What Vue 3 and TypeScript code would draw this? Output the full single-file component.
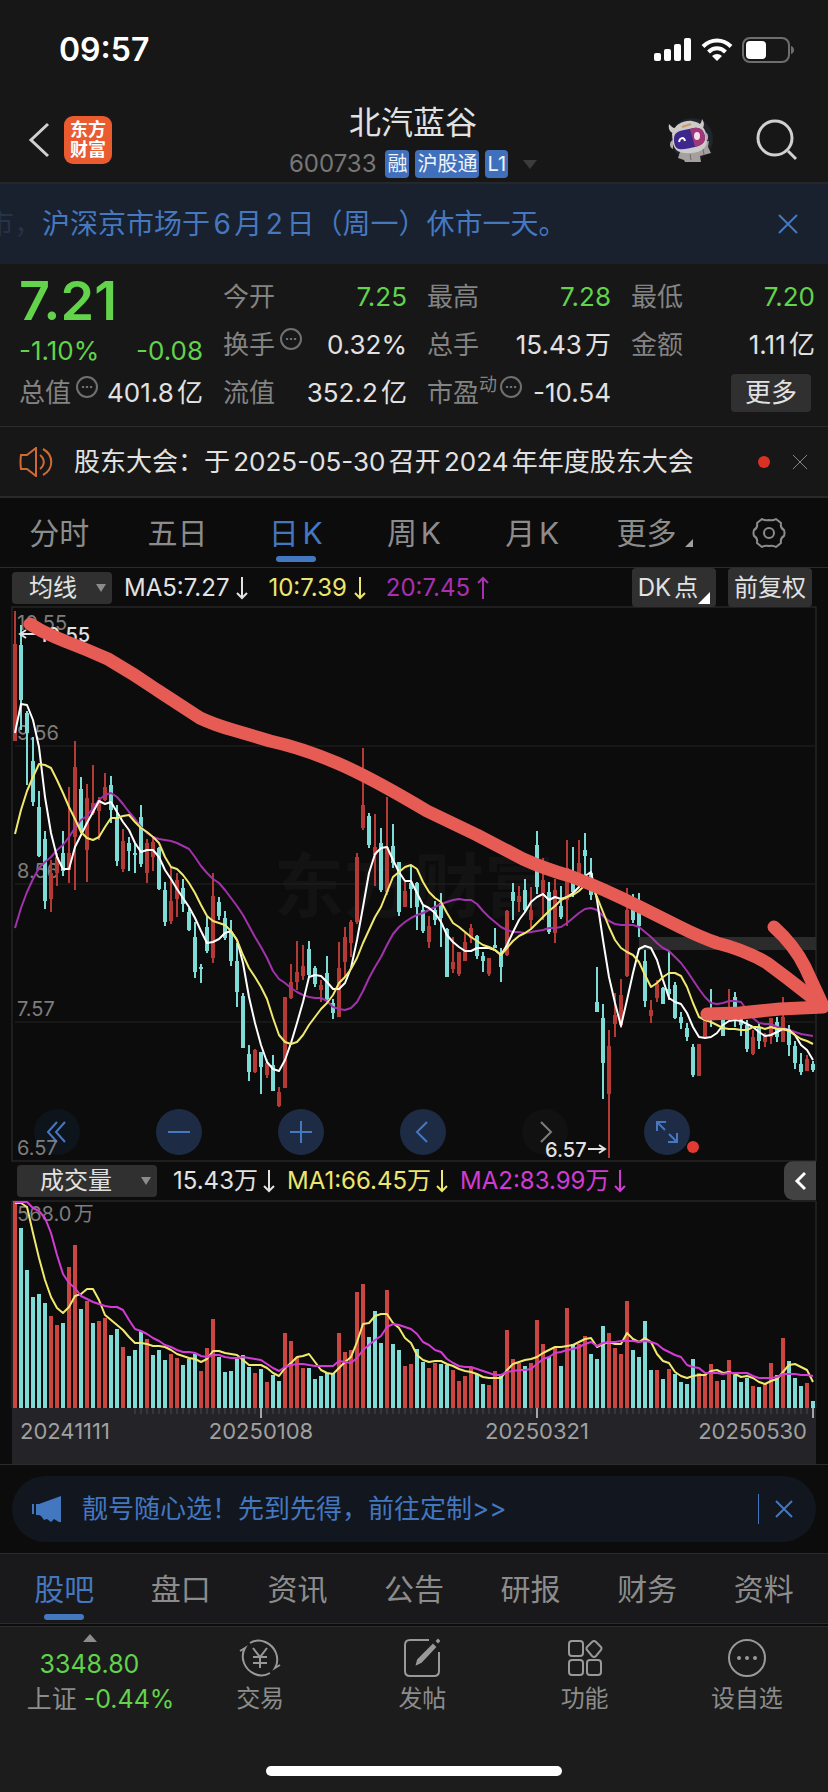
<script setup lang="ts">
import { ref } from 'vue'

type Candle = [up: number, high: number, open: number, close: number, low: number]

const STEP = 6
const FIRST = 15
const x = (i: number): number => FIRST + i * STEP

const candles: Candle[] = [
  [1, 611, 644, 741, 741], [0, 625, 645, 700, 730], [0, 711, 713, 733, 785], [0, 737, 761, 802, 806],
  [0, 791, 807, 856, 857], [0, 831, 839, 901, 909], [1, 860, 873, 899, 912], [1, 853, 857, 873, 886],
  [0, 831, 853, 871, 876], [1, 787, 853, 870, 883], [1, 741, 767, 837, 890], [0, 777, 789, 830, 833],
  [1, 784, 798, 850, 882], [1, 765, 803, 813, 815], [1, 797, 800, 811, 840], [1, 773, 787, 800, 801],
  [0, 776, 785, 810, 823], [0, 805, 818, 861, 866], [1, 829, 841, 869, 872], [0, 837, 843, 851, 871],
  [0, 843, 853, 855, 873], [0, 805, 817, 864, 867], [1, 839, 843, 873, 883], [1, 837, 842, 857, 871],
  [0, 847, 848, 889, 890], [0, 882, 890, 922, 926], [1, 867, 901, 921, 924], [1, 873, 880, 899, 917],
  [0, 879, 888, 904, 912], [0, 908, 912, 930, 931], [0, 922, 937, 972, 978], [0, 964, 967, 969, 983],
  [0, 916, 927, 951, 953], [1, 873, 896, 958, 963], [0, 897, 902, 916, 920], [0, 911, 918, 938, 940],
  [0, 920, 932, 961, 966], [0, 943, 961, 992, 1007], [0, 993, 996, 1048, 1048], [0, 1045, 1054, 1072, 1081],
  [1, 1049, 1050, 1072, 1073], [0, 1052, 1052, 1067, 1094], [1, 1059, 1063, 1075, 1078], [0, 1055, 1065, 1091, 1091],
  [1, 1087, 1092, 1106, 1107], [1, 997, 997, 1088, 1088], [1, 964, 982, 998, 999], [1, 941, 972, 982, 990],
  [1, 945, 966, 976, 980], [0, 941, 949, 975, 977], [0, 966, 968, 984, 987], [1, 980, 985, 990, 1002],
  [0, 956, 973, 999, 1002], [0, 999, 1003, 1013, 1019], [1, 942, 968, 1017, 1017], [1, 927, 937, 962, 977],
  [1, 920, 922, 943, 957], [1, 853, 857, 922, 924], [1, 748, 805, 828, 830], [0, 813, 816, 845, 848],
  [1, 814, 847, 855, 886], [0, 828, 843, 890, 892], [1, 797, 847, 892, 895], [0, 824, 846, 863, 868],
  [0, 862, 862, 912, 916], [1, 882, 891, 907, 907], [0, 865, 883, 889, 908], [0, 882, 883, 907, 930],
  [0, 906, 910, 931, 933], [1, 916, 926, 942, 948], [0, 901, 910, 920, 925], [0, 893, 903, 918, 947],
  [0, 928, 929, 977, 977], [1, 937, 962, 969, 973], [1, 952, 952, 974, 976], [1, 933, 942, 961, 961],
  [1, 924, 928, 938, 943], [0, 935, 936, 956, 959], [0, 952, 956, 961, 972], [1, 958, 958, 974, 976],
  [0, 928, 945, 948, 948], [0, 948, 954, 967, 982], [1, 910, 911, 955, 956], [0, 883, 892, 901, 920],
  [1, 886, 896, 902, 912], [0, 879, 890, 910, 912], [1, 887, 910, 920, 928], [0, 831, 845, 887, 894],
  [1, 858, 880, 893, 920], [0, 882, 892, 932, 934], [1, 879, 890, 933, 943], [0, 886, 906, 917, 919],
  [1, 840, 868, 900, 926], [0, 847, 875, 892, 897], [1, 840, 863, 883, 887], [0, 833, 850, 856, 877],
  [0, 858, 873, 895, 900], [0, 967, 1002, 1012, 1012], [0, 1004, 1018, 1063, 1099], [1, 1030, 1046, 1094, 1158],
  [1, 993, 1015, 1024, 1037], [1, 979, 995, 1025, 1028], [1, 888, 910, 976, 977], [0, 894, 905, 920, 923],
  [0, 893, 912, 926, 937], [0, 950, 961, 1001, 1007], [1, 1000, 1010, 1016, 1023], [1, 980, 984, 998, 1002],
  [0, 987, 988, 1004, 1004], [0, 951, 989, 994, 1000], [0, 982, 985, 1018, 1019], [0, 1012, 1017, 1023, 1029],
  [0, 1023, 1028, 1037, 1041], [0, 1044, 1047, 1075, 1077], [1, 1044, 1044, 1076, 1076], [1, 1018, 1018, 1037, 1037],
  [0, 989, 1013, 1020, 1027], [1, 1013, 1013, 1020, 1020], [0, 1017, 1020, 1036, 1036], [1, 989, 1007, 1013, 1022],
  [0, 992, 997, 1020, 1027], [0, 1013, 1018, 1025, 1036], [0, 1020, 1025, 1049, 1052], [1, 1030, 1037, 1054, 1055],
  [0, 1023, 1027, 1041, 1049], [1, 1033, 1035, 1042, 1047], [1, 1018, 1018, 1037, 1044], [0, 1017, 1022, 1037, 1042],
  [1, 997, 1017, 1042, 1042], [0, 1025, 1029, 1045, 1056], [0, 1041, 1046, 1063, 1069], [0, 1053, 1064, 1072, 1075],
  [1, 1055, 1059, 1071, 1071], [0, 1061, 1064, 1070, 1072],
]

const ma5 = [
  733, 704, 705, 720, 747, 797, 833, 857, 869, 869, 847, 835, 823, 812, 801, 804, 802, 812, 822, 830,
  843, 852, 850, 850, 857, 870, 879, 889, 898, 907, 918, 931, 943, 942, 939, 933, 931, 940, 963, 997,
  1023, 1045, 1062, 1069, 1071, 1060, 1043, 1023, 1002, 977, 975, 976, 982, 989, 989, 983, 968, 940, 907, 873,
  854, 848, 847, 860, 872, 881, 881, 893, 905, 908, 913, 922, 935, 942, 947, 951, 951, 948, 948, 948,
  950, 955, 945, 932, 920, 912, 902, 897, 894, 900, 897, 899, 897, 893, 887, 876, 872, 900, 940, 977,
  1003, 1026, 1000, 973, 949, 946, 948, 960, 980, 998, 1002, 1004, 1013, 1027, 1037, 1038, 1037, 1033, 1025, 1021,
  1020, 1021, 1024, 1027, 1032, 1036, 1035, 1032, 1029, 1030, 1035, 1045, 1050, 1060,
]
const ma10 = [
  834, 810, 791, 777, 764, 765, 768, 780, 793, 807, 819, 832, 838, 840, 837, 827, 818, 818, 816, 815,
  822, 828, 832, 837, 843, 857, 867, 869, 875, 883, 893, 905, 916, 921, 923, 925, 931, 940, 955, 968,
  977, 987, 999, 1018, 1035, 1042, 1044, 1042, 1035, 1025, 1017, 1009, 1003, 995, 983, 977, 969, 958, 943, 930,
  917, 907, 892, 877, 872, 867, 865, 869, 882, 892, 898, 902, 913, 923, 927, 932, 937, 941, 945, 947,
  950, 955, 948, 941, 936, 933, 929, 923, 917, 911, 906, 900, 897, 895, 891, 885, 884, 897, 912, 927,
  940, 948, 952, 955, 962, 975, 987, 983, 977, 973, 973, 976, 987, 1003, 1017, 1020, 1022, 1025, 1028, 1029,
  1029, 1030, 1030, 1027, 1027, 1029, 1027, 1029, 1029, 1031, 1035, 1039, 1041, 1044,
]
const ma20 = [
  928, 908, 892, 879, 868, 862, 857, 850, 845, 837, 828, 820, 816, 808, 800, 795, 793, 797, 804, 812,
  819, 827, 833, 837, 839, 840, 841, 843, 846, 849, 857, 866, 873, 879, 883, 890, 898, 906, 915, 926,
  937, 947, 958, 971, 979, 983, 988, 992, 995, 997, 998, 998, 1001, 1007, 1009, 1010, 1008, 1002, 991, 978,
  967, 957, 945, 934, 927, 922, 918, 915, 913, 910, 907, 904, 902, 900, 899, 900, 900, 904, 911, 917,
  922, 927, 930, 932, 932, 933, 932, 931, 930, 928, 928, 927, 923, 918, 913, 909, 908, 910, 916, 921,
  924, 925, 925, 925, 927, 932, 937, 943, 948, 951, 957, 963, 971, 980, 989, 997, 1003, 1004, 1003, 1001,
  1001, 1002, 1010, 1018, 1023, 1024, 1024, 1027, 1028, 1030, 1032, 1034, 1035, 1036,
]

const volumes = [
  1201, 1228, 1270, 1297, 1294, 1303, 1316, 1325, 1323, 1267, 1245, 1309, 1301, 1323, 1321, 1318, 1335, 1329, 1347, 1356,
  1350, 1331, 1339, 1355, 1350, 1360, 1354, 1358, 1365, 1359, 1354, 1371, 1348, 1319, 1357, 1372, 1371, 1359, 1355, 1367,
  1373, 1369, 1382, 1375, 1381, 1333, 1341, 1357, 1368, 1368, 1379, 1376, 1373, 1373, 1333, 1352, 1350, 1292, 1284, 1337,
  1311, 1343, 1290, 1344, 1350, 1366, 1364, 1349, 1362, 1368, 1363, 1364, 1365, 1370, 1381, 1376, 1367, 1374, 1384, 1385,
  1371, 1376, 1330, 1359, 1363, 1366, 1363, 1320, 1344, 1357, 1347, 1366, 1308, 1344, 1344, 1336, 1354, 1359, 1326, 1333,
  1348, 1354, 1301, 1350, 1357, 1321, 1370, 1370, 1379, 1369, 1374, 1382, 1384, 1359, 1373, 1374, 1364, 1381, 1380, 1360,
  1375, 1382, 1378, 1386, 1387, 1384, 1363, 1375, 1338, 1361, 1378, 1386, 1383, 1401,
]
const volumeUp =
  '10000011011010110010' + '00100011000111000000' + '10100111100000111110' + '00100110011001111001' +
  '10111011101010110001' + '11100001010000111101' + '00010110100010'
const volMa1 = [
  1203, 1203, 1207, 1233, 1258, 1280, 1297, 1308, 1313, 1307, 1296, 1294, 1289, 1289, 1300, 1315, 1320, 1325, 1330, 1337,
  1343, 1343, 1344, 1346, 1346, 1347, 1350, 1354, 1356, 1358, 1359, 1362, 1359, 1351, 1351, 1353, 1354, 1355, 1360, 1365,
  1365, 1365, 1368, 1373, 1376, 1368, 1363, 1357, 1356, 1354, 1362, 1370, 1373, 1374, 1368, 1362, 1357, 1342, 1324, 1323,
  1316, 1314, 1314, 1323, 1328, 1338, 1343, 1355, 1360, 1362, 1361, 1361, 1364, 1366, 1369, 1371, 1372, 1374, 1377, 1378,
  1378, 1378, 1370, 1364, 1362, 1360, 1359, 1357, 1353, 1350, 1347, 1347, 1346, 1345, 1342, 1339, 1338, 1347, 1344, 1342,
  1344, 1344, 1333, 1339, 1342, 1338, 1342, 1354, 1361, 1363, 1372, 1376, 1378, 1376, 1375, 1375, 1371, 1370, 1373, 1372,
  1374, 1377, 1376, 1378, 1382, 1384, 1381, 1379, 1372, 1365, 1364, 1367, 1370, 1382,
]
const volMa2 = [
  1202, 1202, 1202, 1208, 1211, 1218, 1233, 1255, 1274, 1283, 1288, 1296, 1299, 1302, 1304, 1306, 1307, 1307, 1310, 1320,
  1329, 1331, 1334, 1338, 1341, 1345, 1347, 1350, 1352, 1352, 1353, 1356, 1357, 1355, 1355, 1357, 1358, 1358, 1357, 1358,
  1359, 1360, 1364, 1368, 1371, 1367, 1365, 1364, 1364, 1365, 1366, 1366, 1366, 1366, 1361, 1362, 1363, 1358, 1350, 1345,
  1340, 1336, 1327, 1324, 1325, 1327, 1329, 1334, 1342, 1345, 1350, 1352, 1359, 1363, 1366, 1367, 1367, 1369, 1371, 1373,
  1375, 1375, 1372, 1371, 1370, 1370, 1369, 1364, 1359, 1357, 1353, 1352, 1350, 1349, 1347, 1344, 1342, 1346, 1343, 1342,
  1342, 1341, 1341, 1341, 1342, 1341, 1342, 1344, 1349, 1352, 1355, 1357, 1365, 1367, 1368, 1373, 1373, 1373, 1374, 1373,
  1373, 1373, 1373, 1376, 1378, 1378, 1378, 1377, 1374, 1374, 1374, 1375, 1375, 1376,
]

const line = (ys: number[]): string => ys.map((y, i) => `${x(i)},${y}`).join(' ')

const levels = [
  { label: '10.55', y: 630 },
  { label: '9.56', y: 740 },
  { label: '8.56', y: 878 },
  { label: '7.57', y: 1016 },
  { label: '6.57', y: 1155 },
]
const gridLines = [746, 884, 1022]
const majorTicks = [41, 87, 133]
const minorTicks = Array.from({ length: 113 }, (_, i) => i + 20)
const dates = [
  { label: '20241111', x: 20, anchor: 'start' },
  { label: '20250108', x: 261, anchor: 'middle' },
  { label: '20250321', x: 537, anchor: 'middle' },
  { label: '20250530', x: 807, anchor: 'end' },
]

const periods = ['分时', '五日', '日K', '周K', '月K', '更多']
const period = ref('日K')
const sections = ['股吧', '盘口', '资讯', '公告', '研报', '财务', '资料']
const section = ref('股吧')
</script>

<template>
  <main class="app">
    <header class="top">
      <div class="status">
        <time>09:57</time>
        <div class="status-icons">
          <svg width="38" height="24" viewBox="0 0 38 24" fill="#fff">
            <rect x="0" y="15" width="7" height="8" rx="2" /><rect x="10" y="11" width="7" height="12" rx="2" />
            <rect x="20" y="6" width="7" height="17" rx="2" /><rect x="30" y="0" width="7" height="23" rx="2" />
          </svg>
          <svg width="32" height="24" viewBox="0 0 32 24" fill="none" stroke="#fff" stroke-width="4">
            <path d="M2 8.500C10 .5 22 .5 30 8.500" /><path d="M7.500 14C12.500 9 19.500 9 24.500 14" />
            <path d="M16 23l-5-5c3-2.700 7-2.700 10 0z" fill="#fff" stroke="none" />
          </svg>
          <svg width="53" height="26" viewBox="0 0 53 26">
            <rect x="1" y="1" width="46" height="24" rx="7" fill="none" stroke="#6e6e6e" stroke-width="2" />
            <rect x="4" y="4" width="20" height="18" rx="4" fill="#fff" />
            <path d="M49 9c4 1 4 7 0 8z" fill="#6e6e6e" />
          </svg>
        </div>
      </div>
      <nav class="nav">
        <div class="nav-left">
          <button class="plain" aria-label="返回">
            <svg width="22" height="36" viewBox="0 0 22 36" fill="none" stroke="#d0d0d0" stroke-width="3">
              <path d="M20 2L3 18l17 16" />
            </svg>
          </button>
          <a class="logo" href="#"><span>东方</span><span>财富</span></a>
        </div>
        <div class="title">
          <h1>北汽蓝谷</h1>
          <div class="sub">
            <span class="code">600733</span>
            <span class="tag">融</span><span class="tag">沪股通</span><span class="tag">L1</span>
            <svg class="drop" width="14" height="9" viewBox="0 0 14 9"><path d="M0 0h14L7 9z" fill="#3b3b3b" /></svg>
          </div>
        </div>
        <div class="nav-right">
          <button class="plain" aria-label="智能助手">
            <svg width="50" height="48" viewBox="0 0 50 48">
              <ellipse cx="26" cy="23" rx="21" ry="21" fill="#20242b" />
              <path d="M14 36l-2 6 6 2 1 2h16l-1-6 11-3-3-6 1-6-5 1-3 7z" fill="#a5a09d" />
              <path d="M24 38l1 6M37 33l1 6" stroke="#6f6b6c" stroke-width="1" />
              <path d="M3 8c-1 5 1 8 4 9l3-4C7 12 5 10 3 8zM36 3c3 4 2 8 0 10l-4-3c2-2 4-4 4-7z" fill="#cdcac9" />
              <path d="M6 18C8 9 17 4 26 5c9 1 14 8 15 17 1 10-6 14-15 15-10 1-17-1-19-9z" fill="#cdcac9" />
              <path d="M8 23c0-6 4-8 10-9l10-2c7-1 10 3 11 9 0 6-3 8-10 10-6 1-12 3-16 2-4-1-5-5-5-10z" fill="#3d268c" />
              <path d="M24 13l4-1c7-1 10 3 11 9 0 6-3 8-10 10z" fill="#9f3874" />
              <path d="M13 26c1-5 5-5 6-1" stroke="#fff" stroke-width="2" fill="none" />
              <ellipse cx="31" cy="20" rx="3" ry="4" fill="#f4dff0" />
              <path d="M16 11l9-3" stroke="#c99d61" stroke-width="2" />
              <path d="M7 24c-4 1-4 8 0 9zM39 16c4 1 4 8 1 10z" fill="#b2aeae" />
            </svg>
          </button>
          <button class="plain" aria-label="搜索">
            <svg width="42" height="42" viewBox="0 0 42 42" fill="none" stroke="#d0d0d0" stroke-width="3">
              <circle cx="19" cy="19" r="17" /><path d="M32 32l8 8" />
            </svg>
          </button>
        </div>
      </nav>
    </header>

    <section class="notice">
      <span class="faded">市，</span>
      <p>沪深京市场于6月2日（周一）休市一天。</p>
      <button class="plain" aria-label="关闭公告">
        <svg width="20" height="20" viewBox="0 0 20 20" stroke="#4678c0" stroke-width="2"><path d="M1 1l18 18M19 1L1 19" /></svg>
      </button>
    </section>

    <section class="quote">
      <div class="col">
        <strong class="price">7.21</strong>
        <div class="cell change"><span>-1.10%</span><span>-0.08</span></div>
        <div class="cell"><span class="key">总值<i class="info">···</i></span><span class="val">401.8亿</span></div>
      </div>
      <div class="col">
        <div class="cell"><span class="key">今开</span><span class="val green">7.25</span></div>
        <div class="cell"><span class="key">换手<i class="info">···</i></span><span class="val">0.32%</span></div>
        <div class="cell"><span class="key">流值</span><span class="val">352.2亿</span></div>
      </div>
      <div class="col">
        <div class="cell"><span class="key">最高</span><span class="val green">7.28</span></div>
        <div class="cell"><span class="key">总手</span><span class="val">15.43万</span></div>
        <div class="cell"><span class="key">市盈<sup>动</sup><i class="info near">···</i></span><span class="val">-10.54</span></div>
      </div>
      <div class="col">
        <div class="cell"><span class="key">最低</span><span class="val green">7.20</span></div>
        <div class="cell"><span class="key">金额</span><span class="val">1.11亿</span></div>
        <div class="cell end"><button class="more">更多</button></div>
      </div>
    </section>

    <section class="meeting">
      <svg width="36" height="30" viewBox="0 0 36 30" fill="none" stroke="#cf6a34" stroke-width="2">
        <path d="M2 8h6l9-7v28l-9-7H2q-1-7 0-14z" /><path d="M21 8c5 4 5 10 0 14M24 2c11 6 11 20 0 26" />
      </svg>
      <a href="#">股东大会：于2025-05-30召开2024年年度股东大会</a>
      <i class="red-dot"></i>
      <button class="plain" aria-label="关闭提醒">
        <svg width="16" height="16" viewBox="0 0 16 16" stroke="#858585" stroke-width="1"><path d="M1 1l14 14M15 1L1 15" /></svg>
      </button>
    </section>

    <div class="periods">
      <button v-for="p in periods" :key="p" :class="{ on: p === period }" @click="period = p">
        {{ p }}<svg v-if="p === '更多'" class="corner" width="8" height="8" viewBox="0 0 8 8"><path d="M8 0v8H0z" fill="#a0a0a0" /></svg>
      </button>
      <button aria-label="设置">
        <svg width="34" height="32" viewBox="0 0 34 32" fill="none" stroke="#8c8c8c" stroke-width="2" stroke-linejoin="round">
          <path d="M10 2q3 2 7 1 4 1 7-1l5 4q-1 5 3 7 1 3 0 6-4 2-3 7l-5 4q-3-2-7-1-4-1-7 1l-5-4q1-5-3-7-1-3 0-6 4-2 3-7z" />
          <circle cx="17" cy="16" r="5" />
        </svg>
      </button>
    </div>

    <section class="chart">
      <div class="bar">
        <button class="select">均线<span class="tri"></span></button>
        <div class="averages">
          <span>MA5:7.27<svg class="arrow" width="12" height="24" viewBox="0 0 12 24"><path d="M6 1v21M1 17l5 5 5-5" /></svg></span>
          <span class="yellow">10:7.39<svg class="arrow" width="12" height="24" viewBox="0 0 12 24"><path d="M6 1v21M1 17l5 5 5-5" /></svg></span>
          <span class="purple">20:7.45<svg class="arrow" width="12" height="24" viewBox="0 0 12 24"><path d="M6 23V2M1 7l5-5 5 5" /></svg></span>
        </div>
        <button class="chip">DK点<svg class="chip-corner" width="12" height="12" viewBox="0 0 12 12"><path d="M12 0v12H0z" fill="#fff" /></svg></button>
        <button class="chip">前复权</button>
      </div>

      <div class="plot">
        <svg class="graph" viewBox="12 607 804 554" role="img" aria-label="日K线图">
          <text class="mark" x="414" y="912" text-anchor="middle">东方财富</text>
          <g stroke="#232323"><path v-for="y in gridLines" :key="y" :d="`M15 ${y}H815`" /></g>
          <rect x="12" y="607" width="804" height="554" fill="none" stroke="#303030" />
          <rect x="639" y="937" width="177" height="13" fill="#2b2b2b" />
          <g class="scale"><text v-for="l in levels" :key="l.label" x="17" :y="l.y">{{ l.label }}</text></g>
          <g v-for="(c, i) in candles" :key="i" :fill="c[0] ? '#b53a36' : '#7edbd6'">
            <rect :x="x(i) - 1" :y="c[1]" width="2" :height="c[4] - c[1]" />
            <rect :x="x(i) - 2" :y="c[2]" width="4" :height="c[3] - c[2]" />
          </g>
          <g fill="none" stroke-width="2" stroke-linejoin="round">
            <polyline :points="line(ma20)" stroke="#a232ab" />
            <polyline :points="line(ma5)" stroke="#fff" />
            <polyline :points="line(ma10)" stroke="#f1e96f" />
          </g>
          <g class="peak">
            <path d="M36 634H20M26 630l-6 4 6 4" /><text x="39" y="642">10.55</text>
            <path d="M588 1149h17M599 1145l6 4-6 4" /><text x="545" y="1157">6.57</text>
          </g>
          <g class="trend">
            <path d="M30 624Q42 632 55 637L67 642Q88 650 108 659Q134 674 157 690L200 718Q215 725 233 730L270 741Q302 748 337 763Q370 777 427 811L477 835L523 859Q545 869 570 876Q602 888 640 907L680 927Q700 937 717 943Q745 950 767 963L787 978L823 1006" />
            <path d="M774 927Q794 945 805 967L823 1006" /><path d="M707 1014L740 1013L780 1009L823 1007" />
          </g>
        </svg>
        <div class="tools">
          <button class="dim" aria-label="最早"><svg viewBox="0 0 24 24"><path d="M12 2L3 12l9 10M20 2l-9 10 9 10" /></svg></button>
          <button aria-label="缩小"><svg viewBox="0 0 24 24"><path d="M1 12h22" /></svg></button>
          <button aria-label="放大"><svg viewBox="0 0 24 24"><path d="M1 12h22M12 1v22" /></svg></button>
          <button aria-label="左移"><svg viewBox="0 0 24 24"><path d="M16 2L6 12l10 10" /></svg></button>
          <button class="grey" aria-label="右移"><svg viewBox="0 0 24 24"><path d="M8 2l10 10L8 22" /></svg></button>
          <button class="expand" aria-label="全屏"><svg viewBox="0 0 24 24"><path d="M2 11V2h9M2 2l8 8M22 13v9h-9M22 22l-8-8" /></svg><i></i></button>
        </div>
      </div>

      <div class="bar volume">
        <button class="select wide">成交量<span class="tri"></span></button>
        <div class="averages tight">
          <span>15.43万<svg class="arrow" width="12" height="24" viewBox="0 0 12 24"><path d="M6 1v21M1 17l5 5 5-5" /></svg></span>
          <span class="yellow">MA1:66.45万<svg class="arrow" width="12" height="24" viewBox="0 0 12 24"><path d="M6 1v21M1 17l5 5 5-5" /></svg></span>
          <span class="magenta">MA2:83.99万<svg class="arrow" width="12" height="24" viewBox="0 0 12 24"><path d="M6 1v21M1 17l5 5 5-5" /></svg></span>
        </div>
        <button class="fold" aria-label="展开">
          <svg width="12" height="20" viewBox="0 0 12 20" fill="none" stroke="#fff" stroke-width="3"><path d="M11 2l-8 8 8 8" /></svg>
        </button>
      </div>

      <svg class="graph" viewBox="12 1200 804 264" role="img" aria-label="成交量图">
        <path d="M12 1408V1201H816V1408" fill="none" stroke="#303030" />
        <rect x="12" y="1408" width="804" height="56" fill="#242327" />
        <rect v-for="(v, i) in volumes" :key="i" :x="x(i) - 2" :y="v" width="4" :height="1408 - v" :fill="volumeUp[i] === '1' ? '#cb4640' : '#7edbd6'" />
        <text class="scale" x="17" y="1221">568.0万</text>
        <g fill="none" stroke-width="2" stroke-linejoin="round">
          <polyline :points="line(volMa1)" stroke="#f1e96f" /><polyline :points="line(volMa2)" stroke="#d23cd4" />
        </g>
        <g stroke="#4c4b4f" stroke-width="1"><path v-for="t in minorTicks" :key="t" :d="`M${x(t)} 1408v6`" /></g>
        <g stroke="#a5a5a5" stroke-width="2"><path v-for="t in majorTicks" :key="t" :d="`M${x(t)} 1408v10`" /></g>
        <g class="dates"><text v-for="d in dates" :key="d.label" :x="d.x" y="1439" :text-anchor="d.anchor">{{ d.label }}</text></g>
      </svg>
    </section>

    <section class="promo-wrap">
      <div class="promo">
        <svg width="30" height="26" viewBox="0 0 30 26" fill="#4377c0">
          <path d="M0 8h2v10H0zM4 8h3l22-8v26h-2l-5-3-3 3-4-3-3 1-3-4-2-1H4z" />
        </svg>
        <a href="#">靓号随心选！先到先得，前往定制&gt;&gt;</a>
        <button class="plain" aria-label="关闭推广">
          <svg width="18" height="18" viewBox="0 0 18 18" stroke="#4377c0" stroke-width="2"><path d="M1 1l16 16M17 1L1 17" /></svg>
        </button>
      </div>
    </section>

    <div class="sections">
      <button v-for="s in sections" :key="s" :class="{ on: s === section }" @click="section = s">{{ s }}</button>
    </div>

    <footer class="foot">
      <div class="foot-row">
        <button class="index">
          <svg width="14" height="8" viewBox="0 0 14 8"><path d="M7 0l7 8H0z" fill="#8c8c8c" /></svg>
          <span class="green">3348.80</span>
          <span class="market">上证 <b>-0.44%</b></span>
        </button>
        <button class="action">
          <svg width="44" height="40" viewBox="0 0 44 40"><path d="M12 5C22-1 34 5 38 15q3 8-1 15l5-3M32 35C22 41 10 35 6 25q-3-8 1-15l-5 3M15 10l7 9 7-9M22 19v11M15 19h14M15 25h14" /></svg>
          <span>交易</span>
        </button>
        <button class="action">
          <svg width="36" height="40" viewBox="0 0 36 40"><path d="M25 2H6q-5 0-5 5v26q0 5 5 5h24q5 0 5-5V14" /><path class="solid" d="M29 7l2 2-14 15-4 2 1-4zM33 3l1-1 1 1-1 1z" /></svg>
          <span>发帖</span>
        </button>
        <button class="action">
          <svg width="36" height="40" viewBox="0 0 36 40"><rect x="2" y="3" width="14" height="15" rx="3" /><rect x="2" y="22" width="14" height="15" rx="3" /><rect x="20" y="22" width="14" height="15" rx="3" /><path d="M25 4q2-2 4 0l5 5q1 1 0 3l-5 6q-2 2-4 0l-5-6q-1-2 0-3z" /></svg>
          <span>功能</span>
        </button>
        <button class="action">
          <svg width="40" height="40" viewBox="0 0 40 40"><circle cx="20" cy="20" r="18" /><g class="solid"><circle cx="12" cy="20" r="1" /><circle cx="20" cy="20" r="1" /><circle cx="28" cy="20" r="1" /></g></svg>
          <span>设自选</span>
        </button>
      </div>
      <div class="home"></div>
    </footer>
  </main>
</template>

<style>
body {
  background: #1c1c1c;
}
</style>

<style scoped>
* {
  box-sizing: border-box;
}
.app {
  min-height: 100vh;
  overflow-x: hidden;
  display: flex;
  flex-direction: column;
  background: #0c0c0c;
  color: #e2e2e2;
  font-family: Inter, 'Noto Sans CJK SC', sans-serif;
  font-weight: 400;
  line-height: 1;
  text-autospace: normal;
}
button {
  font: inherit;
  line-height: 1;
  color: inherit;
  border: 0;
  padding: 0;
  margin: 0;
  background: none;
}
.plain {
  display: flex;
}
a {
  color: inherit;
  text-decoration: none;
}
.green {
  color: #62d34a;
}
.yellow {
  color: #ece66e;
}
.purple {
  color: #a92fb1;
}
.magenta {
  color: #d13bd3;
}

.top {
  background: #171717;
  border-bottom: 2px solid #25282a;
}
.status {
  height: 98px;
  padding: 2px 33px 0 59px;
  display: flex;
  align-items: center;
  justify-content: space-between;
  color: #fff;
}
.status time {
  font-size: 32px;
  font-weight: 600;
}
.status-icons {
  display: flex;
  align-items: center;
  gap: 9px;
}
.nav {
  height: 84px;
  padding: 0 30px 0 28px;
  display: grid;
  grid-template-columns: 1fr auto 1fr;
  align-items: center;
}
.nav-left,
.nav-right {
  display: flex;
  align-items: center;
  gap: 14px;
}
.nav-right {
  justify-content: flex-end;
  gap: 40px;
}
.logo {
  width: 48px;
  height: 48px;
  border-radius: 9px;
  background: #ea5b2f;
  color: #fff;
  font-size: 18px;
  font-weight: 700;
  display: flex;
  flex-direction: column;
  align-items: center;
  justify-content: center;
  line-height: 20px;
}
.title {
  padding-top: 5px;
  display: flex;
  flex-direction: column;
  align-items: center;
  gap: 11px;
}
h1 {
  margin: 0;
  font-size: 32px;
  line-height: 32px;
  font-weight: 400;
}
.sub {
  display: flex;
  align-items: center;
  gap: 6px;
}
.code {
  font-size: 24px;
  color: #777;
  margin-right: 3px;
}
.tag {
  height: 28px;
  line-height: 28px;
  padding: 0 2px;
  border-radius: 4px;
  background: #4070bb;
  color: #eef3fa;
  font-size: 20px;
}
.drop {
  margin-left: 9px;
}

.notice {
  height: 80px;
  padding: 0 30px 0 0;
  background: #18212d;
  color: #4678c0;
  font-size: 28px;
  display: flex;
  align-items: center;
  white-space: nowrap;
}
.faded {
  width: 42px;
  display: flex;
  justify-content: flex-end;
  overflow: hidden;
  color: #253247;
}
.notice p {
  margin: 0;
  flex: 1;
}

.quote {
  padding: 9px 13px 9px 19px;
  background: #171717;
  border-bottom: 1px solid #2b2b2b;
  display: grid;
  grid-template-columns: repeat(4, 1fr);
  column-gap: 20px;
}
.col {
  display: grid;
  grid-template-rows: repeat(3, 48px);
}
.col:first-child {
  grid-template-rows: 60px 36px 48px;
}
.price {
  font-size: 54px;
  line-height: 56px;
  font-weight: 600;
  color: #62d34a;
}
.cell {
  display: flex;
  align-items: center;
  justify-content: space-between;
  font-size: 26px;
  white-space: nowrap;
}
.cell.end {
  justify-content: flex-end;
  padding-right: 4px;
}
.change {
  color: #62d34a;
}
.key {
  color: #838383;
  display: flex;
  align-items: center;
}
.key sup {
  font-size: 18px;
  line-height: 18px;
  align-self: flex-start;
  margin-top: -4px;
}
.info {
  width: 22px;
  height: 22px;
  margin: -12px 0 0 5px;
  border: 2px solid #707070;
  border-radius: 50%;
  font-size: 12px;
  line-height: 17px;
  font-style: normal;
  font-weight: 700;
  text-align: center;
}
.info.near {
  margin-left: 3px;
}
.more {
  width: 80px;
  height: 38px;
  border-radius: 4px;
  background: #303030;
}

.meeting {
  height: 71px;
  padding: 0 20px 0 19px;
  background: #171717;
  border-bottom: 2px solid #292929;
  display: flex;
  align-items: center;
  font-size: 26px;
  white-space: nowrap;
}
.meeting a {
  flex: 1;
  margin-left: 19px;
}
.red-dot {
  width: 12px;
  height: 12px;
  margin-right: 22px;
  border-radius: 50%;
  background: #d93225;
}

.periods {
  height: 70px;
  border-bottom: 1px solid #2b2b2b;
  display: grid;
  grid-template-columns: repeat(7, 1fr);
  color: #8c8c8c;
  font-size: 30px;
}
.periods button,
.sections button {
  display: flex;
  align-items: center;
  justify-content: center;
  position: relative;
}
.corner {
  align-self: flex-end;
  margin: 0 -8px 20px 8px;
}
.on {
  color: #4377c0;
}
.on::after {
  content: '';
  position: absolute;
  left: 50%;
  bottom: 5px;
  width: 40px;
  height: 6px;
  margin-left: -20px;
  border-radius: 3px;
  background: #4377c0;
}

.chart {
  padding: 0 12px;
}
.bar {
  height: 39px;
  display: flex;
  align-items: center;
  font-size: 24px;
  white-space: nowrap;
}
.bar.volume {
  padding-left: 5px;
}
.select {
  width: 100px;
  height: 32px;
  padding: 0 6px 0 17px;
  border-radius: 4px;
  background: #303030;
  display: flex;
  align-items: center;
  justify-content: space-between;
}
.select.wide {
  width: 140px;
  padding-left: 23px;
}
.tri {
  border: 5px solid transparent;
  border-top: 8px solid #8c8c8c;
  border-bottom: 0;
}
.averages {
  flex: 1;
  padding-left: 12px;
  display: flex;
  gap: 20px;
  text-autospace: no-autospace;
}
.averages.tight {
  padding-left: 16px;
  gap: 12px;
}
.averages span {
  display: flex;
  align-items: center;
}
.arrow {
  margin-left: 7px;
  fill: none;
  stroke: currentColor;
  stroke-width: 2;
}
.tight .arrow {
  margin-left: 5px;
}
.chip {
  position: relative;
  width: 84px;
  height: 39px;
  margin-right: 4px;
  border-radius: 4px;
  background: #303030;
}
.chip:not(:last-child) {
  margin-right: 12px;
  padding-right: 12px;
}
.chip-corner {
  position: absolute;
  right: 6px;
  bottom: 3px;
}
.fold {
  width: 32px;
  height: 39px;
  border-radius: 9px 0 0 9px;
  background: #424242;
  display: flex;
  align-items: center;
  justify-content: center;
}

.plot {
  position: relative;
}
.graph {
  display: block;
  width: 100%;
  overflow: visible;
}
.plot .graph {
  position: relative;
  z-index: 1;
  pointer-events: none;
}
.mark {
  font-size: 70px;
  font-weight: 700;
  fill: #131313;
}
.scale {
  font-size: 20px;
  fill: #7d7d7d;
}
.peak {
  font-size: 20px;
  font-weight: 500;
  fill: #e2e2e2;
}
.peak path {
  fill: none;
  stroke: #e2e2e2;
  stroke-width: 2;
}
.trend {
  fill: none;
  stroke: #e75b55;
  stroke-width: 13;
  stroke-linecap: round;
  stroke-linejoin: round;
}
.dates {
  font-size: 22px;
  fill: #a0a0a0;
}
.tools {
  position: absolute;
  left: 0;
  right: 0;
  bottom: 6px;
  padding: 0 126px 0 22px;
  display: flex;
  justify-content: space-between;
}
.tools button {
  position: relative;
  width: 46px;
  height: 46px;
  border-radius: 50%;
  background: #1d2b44;
  display: flex;
  align-items: center;
  justify-content: center;
}
.tools .dim {
  background: #0e141c;
}
.tools .grey {
  background: #111;
}
.tools svg {
  width: 24px;
  height: 24px;
  fill: none;
  stroke: #4678c0;
  stroke-width: 2;
}
.tools .grey svg {
  stroke: #7d7d7d;
}
.expand i {
  position: absolute;
  right: -9px;
  bottom: 2px;
  width: 12px;
  height: 12px;
  border-radius: 50%;
  background: #e03a32;
}

.promo-wrap {
  padding: 11px 12px;
  border-top: 1px solid #2b2b2b;
}
.promo {
  height: 66px;
  padding: 0 23px 0 20px;
  border-radius: 33px;
  background: #11161f;
  color: #4377c0;
  font-size: 26px;
  display: flex;
  align-items: center;
}
.promo a {
  flex: 1;
  margin-left: 20px;
}
.promo .plain {
  height: 30px;
  padding-left: 16px;
  border-left: 1px solid #4377c0;
  align-items: center;
}

.sections {
  height: 71px;
  padding: 0 6px;
  background: #19191b;
  border-top: 1px solid #2b2b2b;
  border-bottom: 1px solid #2b2b2b;
  display: grid;
  grid-template-columns: repeat(7, 1fr);
  color: #8c8c8c;
  font-size: 30px;
}
.sections .on::after {
  bottom: 3px;
}

.foot {
  flex: 1;
  margin-top: 2px;
  background: #1c1c1c;
  border-top: 1px solid #2b2b2b;
}
.foot-row {
  height: 139px;
  display: grid;
  grid-template-columns: 179px repeat(4, 1fr);
  align-items: start;
  color: #8c8c8c;
}
.index {
  padding-top: 7px;
  display: flex;
  flex-direction: column;
  align-items: center;
  gap: 10px;
  font-size: 25px;
  white-space: nowrap;
}
.market {
  padding-left: 22px;
}
.index b {
  font-weight: 400;
  color: #62d34a;
}
.action {
  padding-top: 11px;
  display: flex;
  flex-direction: column;
  align-items: center;
  gap: 9px;
  font-size: 24px;
}
.action svg {
  fill: none;
  stroke: #999;
  stroke-width: 2;
}
.action .solid {
  fill: #999;
}
.home {
  width: 296px;
  height: 10px;
  margin: 0 auto 16px;
  border-radius: 5px;
  background: #fff;
}
</style>
